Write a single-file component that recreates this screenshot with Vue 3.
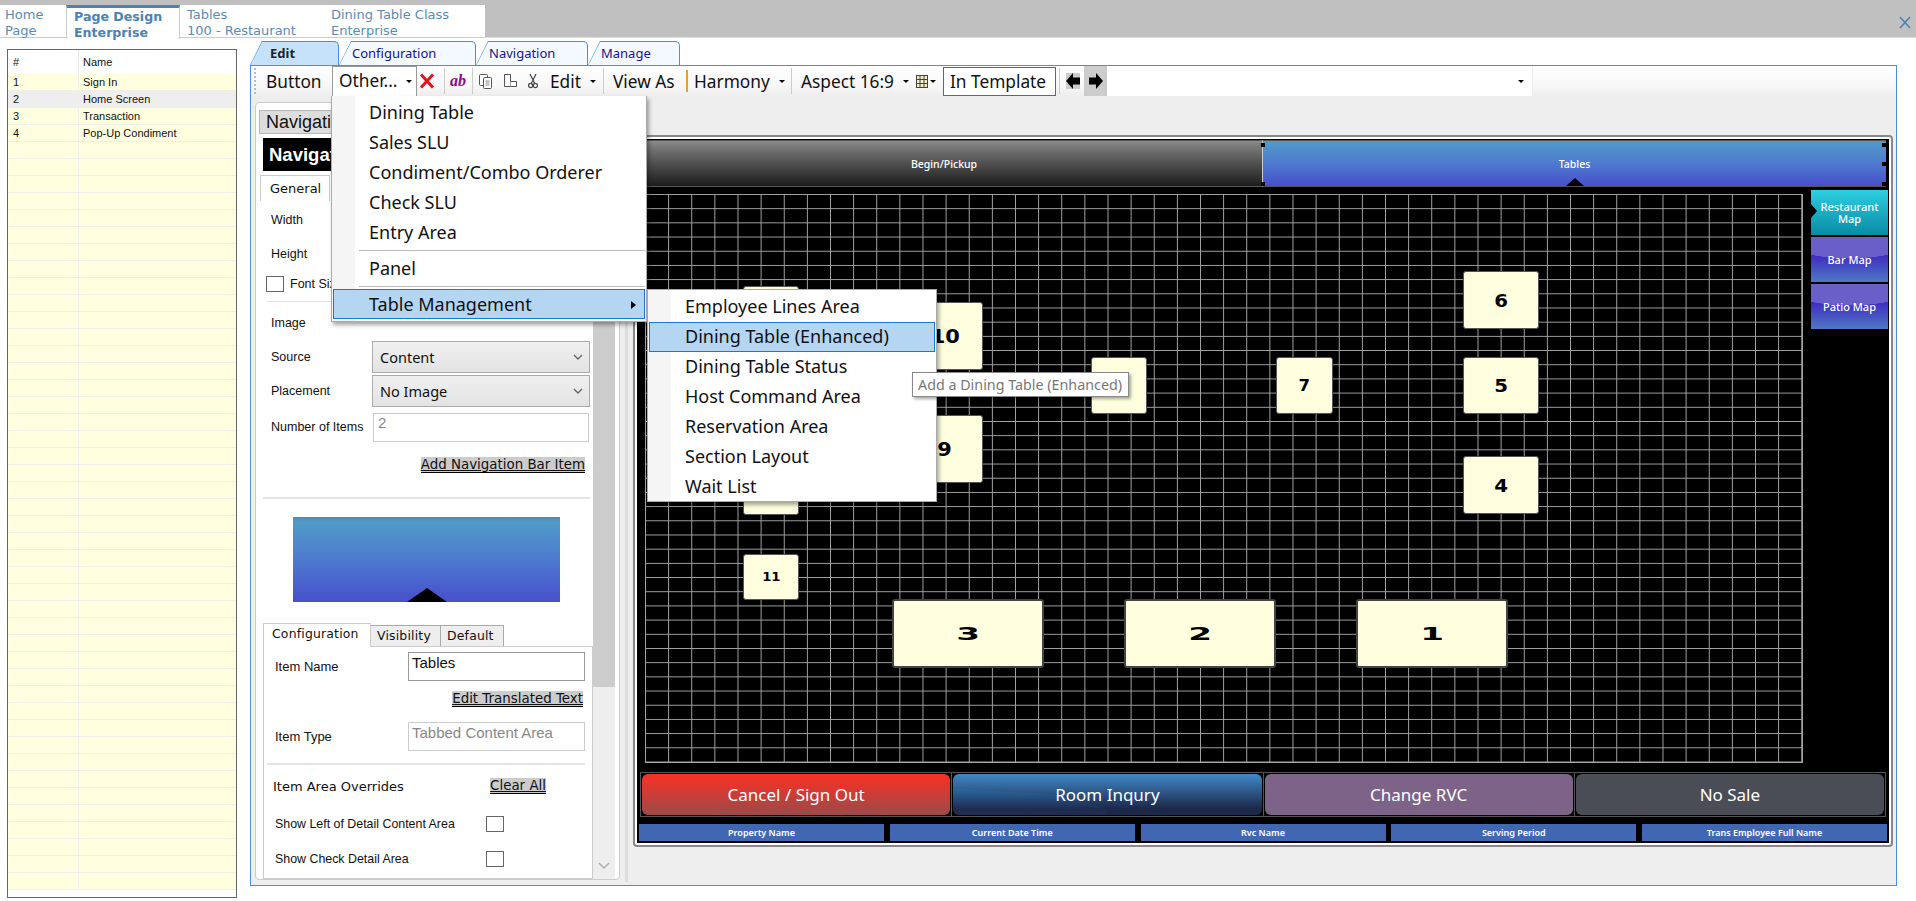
<template>
  <div class="app">
    <header class="top-bar">
      <div class="doc-tabs">
        <div
          v-for="tab in docTabs"
          :key="tab.title"
          class="doc-tab"
          :class="{ active: tab.active }"
          :style="{ width: tab.width + 'px' }"
        >
          <div>{{ tab.title }}</div>
          <div>{{ tab.sub }}</div>
        </div>
      </div>
      <svg class="close-x" width="12" height="13" viewBox="0 0 12 13">
        <path d="M1 1 L11 12 M11 1 L1 12" stroke="#4a82b4" stroke-width="1.6" fill="none" />
      </svg>
    </header>

    <div class="body-row">
      <aside class="page-list">
        <div class="list-head">
          <div class="col-num">#</div>
          <div class="col-name">Name</div>
        </div>
        <div
          v-for="(row, i) in pageRows"
          :key="i"
          class="list-row"
          :class="{ selected: row.name === 'Home Screen' }"
        >
          <div class="col-num">{{ row.num }}</div>
          <div class="col-name">{{ row.name }}</div>
        </div>
      </aside>

      <main class="editor">
        <nav class="edit-tabs">
          <div
            v-for="tab in editTabs"
            :key="tab.label"
            class="edit-tab"
            :class="{ active: tab.active }"
            :style="{ width: tab.width + 'px' }"
          >
            <span>{{ tab.label }}</span>
          </div>
        </nav>

        <div class="edit-panel">
          <div class="toolbar">
            <span class="grip"></span>
            <span class="tool-text t-button">Button</span>
            <span class="other-btn">Other...<i class="caret"></i></span>
            <svg class="i-x" width="16" height="16" viewBox="0 0 16 16">
              <path d="M2 1.5 L14 14.5 M14 1.5 L2 14.5" stroke="#e3141b" stroke-width="3" fill="none" />
            </svg>
            <span class="tool-sep"></span>
            <span class="ab">ab</span>
            <span class="tool-sep"></span>
            <svg class="i-copy" width="16" height="17" viewBox="0 0 16 17">
              <rect x="1.5" y="1.5" width="8" height="11" rx="1" fill="#fff" stroke="#555" />
              <rect x="5.5" y="4.5" width="8" height="11" rx="1" fill="#fff" stroke="#555" />
              <path d="M7.5 8 H11.5 M7.5 10 H11.5 M7.5 12 H11.5" stroke="#888" />
            </svg>
            <svg class="i-paste" width="16" height="17" viewBox="0 0 16 17">
              <path d="M2.5 1.5 H8.5 V13.5 H2.5 Z" fill="#fff" stroke="#555" />
              <path d="M8.5 8.5 H14.5 V13.5 H8.5" fill="#fff" stroke="#555" />
            </svg>
            <svg class="i-cut" width="10" height="17" viewBox="0 0 10 17">
              <path d="M2 1 L6.5 10 M8 1 L3.5 10" stroke="#444" stroke-width="1.2" fill="none" />
              <circle cx="2.6" cy="12.5" r="2.1" fill="none" stroke="#444" stroke-width="1.2" />
              <circle cx="7.4" cy="12.5" r="2.1" fill="none" stroke="#444" stroke-width="1.2" />
            </svg>
            <span class="tool-text t-edit">Edit<i class="caret"></i></span>
            <span class="tool-sep"></span>
            <span class="tool-text t-view">View As</span>
            <span class="orange-bar"></span>
            <span class="tool-text t-harmony">Harmony<i class="caret"></i></span>
            <span class="tool-sep"></span>
            <span class="tool-text t-aspect">Aspect 16:9<i class="caret"></i></span>
            <svg class="i-grid" width="12" height="13" viewBox="0 0 12 13">
              <rect x="0.5" y="0.5" width="11" height="12" fill="#f2efc8" stroke="#444" />
              <path d="M4 0 V13 M8 0 V13 M0 4.5 H12 M0 8.5 H12" stroke="#444" />
            </svg>
            <i class="caret small"></i>
            <span class="template-btn">In Template</span>
            <span class="tool-sep"></span>
            <span class="arrow-btn left">
              <svg width="14" height="16" viewBox="0 0 14 16"><path d="M0 8 L7 0 V4.5 H14 V11.5 H7 V16 Z" fill="#000" /></svg>
            </span>
            <span class="arrow-btn right">
              <svg width="14" height="16" viewBox="0 0 14 16"><path d="M14 8 L7 0 V4.5 H0 V11.5 H7 V16 Z" fill="#000" /></svg>
            </span>
            <span class="combo"><i class="caret"></i></span>
          </div>

          <div class="workspace">
            <section class="props">
              <div class="props-main">
                <div class="nav-tag">Navigation Bar</div>
                <div class="black-head">Navigation Bar</div>
                <div class="general-tabs">
                  <span class="general-tab">General</span>
                </div>

                <div class="form-row"><label>Width</label></div>
                <div class="form-row"><label>Height</label></div>
                <div class="font-row">
                  <span class="check"></span>
                  <label>Font Size</label>
                </div>
                <div class="divider thin"></div>
                <div class="form-row image-row"><label>Image</label></div>
                <div class="form-row">
                  <label>Source</label>
                  <div class="select">Content<svg width="10" height="6" viewBox="0 0 10 6"><path d="M1 1 L5 5 L9 1" stroke="#666" stroke-width="1.4" fill="none" /></svg></div>
                </div>
                <div class="form-row">
                  <label>Placement</label>
                  <div class="select">No Image<svg width="10" height="6" viewBox="0 0 10 6"><path d="M1 1 L5 5 L9 1" stroke="#666" stroke-width="1.4" fill="none" /></svg></div>
                </div>
                <div class="form-row items-row">
                  <label>Number of Items</label>
                  <div class="input disabled">2</div>
                </div>
                <div class="link-row"><a class="link">Add Navigation Bar Item</a></div>
                <div class="divider"></div>
                <div class="preview"><i class="preview-tri"></i></div>

                <div class="sub-tabs">
                  <span class="sub-tab active">Configuration</span>
                  <span class="sub-tab">Visibility</span>
                  <span class="sub-tab">Default</span>
                </div>
                <div class="sub-box">
                  <div class="item-row">
                    <label>Item Name</label>
                    <div class="input dark">Tables</div>
                  </div>
                  <div class="link-row translated"><a class="link">Edit Translated Text</a></div>
                  <div class="item-row type-row">
                    <label>Item Type</label>
                    <div class="input disabled">Tabbed Content Area</div>
                  </div>
                  <div class="divider box-divider"></div>
                  <div class="override-head">
                    <span>Item Area Overrides</span>
                    <a class="link">Clear All</a>
                  </div>
                  <div class="override-row">
                    <label>Show Left of Detail Content Area</label>
                    <span class="check"></span>
                  </div>
                  <div class="override-row">
                    <label>Show Check Detail Area</label>
                    <span class="check"></span>
                  </div>
                </div>
              </div>
              <div class="scrollbar">
                <div class="scroll-thumb"></div>
                <svg class="scroll-down" width="12" height="8" viewBox="0 0 12 8"><path d="M1 1 L6 6 L11 1" stroke="#aaa" stroke-width="1.4" fill="none" /></svg>
              </div>
            </section>

            <div class="splitter"></div>

            <section class="canvas-frame">
              <div class="canvas">
                <div class="page-tabs">
                  <div class="page-tab begin">Begin/Pickup</div>
                  <div class="page-tab tables">
                    Tables
                    <i class="tab-tri"></i>
                    <i class="handle h-tl"></i>
                    <i class="handle h-bl"></i>
                    <i class="handle h-tr"></i>
                    <i class="handle h-mr"></i>
                    <i class="handle h-br"></i>
                  </div>
                </div>

                <div class="floor-row">
                  <div class="floor">
                    <div
                      v-for="t in diningTables"
                      :key="t.label + t.x + t.y"
                      class="table-card"
                      :class="t.kind"
                      :style="{ left: t.x + 'px', top: t.y + 'px', width: t.w + 'px', height: t.h + 'px' }"
                    >
                      <span>{{ t.label }}</span>
                    </div>
                  </div>
                  <div class="side-maps">
                    <div class="map-btn restaurant"><i class="map-tri"></i><span>Restaurant<br />Map</span></div>
                    <div class="map-btn purple"><span>Bar Map</span></div>
                    <div class="map-btn purple"><span>Patio Map</span></div>
                  </div>
                </div>

                <div class="action-row">
                  <div v-for="a in actions" :key="a.label" class="action-cell">
                    <div class="action-btn" :class="a.kind"><span>{{ a.label }}</span></div>
                  </div>
                </div>

                <div class="status-row">
                  <div v-for="s in statusItems" :key="s" class="status-cell">{{ s }}</div>
                </div>
              </div>
            </section>
          </div>
        </div>
      </main>
    </div>

    <!-- open dropdown, sits over the panel and the canvas -->
    <div class="menu main-menu">
      <template v-for="item in mainMenu" :key="item.label">
        <div v-if="item.sep" class="menu-sep"></div>
        <div v-else class="menu-item" :class="{ hot: item.hot }">
          {{ item.label }}
          <svg v-if="item.hot" class="sub-arrow" width="5" height="8" viewBox="0 0 5 8"><path d="M0 0 L5 4 L0 8 Z" fill="#000" /></svg>
        </div>
      </template>
    </div>
    <div class="menu sub-menu">
      <div v-for="item in subMenu" :key="item" class="menu-item" :class="{ hot: item === 'Dining Table (Enhanced)' }">
        {{ item }}
      </div>
    </div>
    <div class="tooltip">Add a Dining Table (Enhanced)</div>
  </div>
</template>

<script setup>
const docTabs = [
  { title: 'Home', sub: 'Page', width: 66 },
  { title: 'Page Design', sub: 'Enterprise', width: 114, active: true },
  { title: 'Tables', sub: '100 - Restaurant', width: 144 },
  { title: 'Dining Table Class', sub: 'Enterprise', width: 161 },
]

const names = ['Sign In', 'Home Screen', 'Transaction', 'Pop-Up Condiment']
const pageRows = Array.from({ length: 48 }, (_, i) => ({
  num: names[i] ? i + 1 : '',
  name: names[i] || '',
}))

const editTabs = [
  { label: 'Edit', width: 89, active: true },
  { label: 'Configuration', width: 137 },
  { label: 'Navigation', width: 112 },
  { label: 'Manage', width: 92 },
]

// positions are relative to the floor grid
const diningTables = [
  { label: '', x: 98, y: 92, w: 56, h: 58 },
  { label: '', x: 98, y: 263, w: 56, h: 58 },
  { label: '10', x: 262, y: 108, w: 76, h: 68, kind: 'mid' },
  { label: '9', x: 262, y: 221, w: 76, h: 68, kind: 'mid' },
  { label: '', x: 446, y: 163, w: 56, h: 57 },
  { label: '7', x: 631, y: 163, w: 57, h: 57, kind: 'small' },
  { label: '6', x: 818, y: 77, w: 76, h: 58 },
  { label: '5', x: 818, y: 163, w: 76, h: 57 },
  { label: '4', x: 818, y: 262, w: 76, h: 58 },
  { label: '11', x: 98, y: 360, w: 56, h: 46, kind: 'tiny' },
  { label: '3', x: 247, y: 405, w: 152, h: 69, kind: 'wide' },
  { label: '2', x: 479, y: 405, w: 152, h: 69, kind: 'wide' },
  { label: '1', x: 711, y: 405, w: 152, h: 69, kind: 'wide' },
]

const actions = [
  { label: 'Cancel / Sign Out', kind: 'red' },
  { label: 'Room Inqury', kind: 'blue' },
  { label: 'Change RVC', kind: 'violet' },
  { label: 'No Sale', kind: 'slate' },
]

const statusItems = ['Property Name', 'Current Date Time', 'Rvc Name', 'Serving Period', 'Trans Employee Full Name']

const mainMenu = [
  { label: 'Dining Table' },
  { label: 'Sales SLU' },
  { label: 'Condiment/Combo Orderer' },
  { label: 'Check SLU' },
  { label: 'Entry Area' },
  { label: 'sep1', sep: true },
  { label: 'Panel' },
  { label: 'sep2', sep: true },
  { label: 'Table Management', hot: true },
]

const subMenu = [
  'Employee Lines Area',
  'Dining Table (Enhanced)',
  'Dining Table Status',
  'Host Command Area',
  'Reservation Area',
  'Section Layout',
  'Wait List',
]
</script>

<style>
html, body { overflow: hidden; background: #fff; }
</style>

<style scoped>
.app {
  position: relative;
  width: 1916px;
  height: 901px;
  overflow: hidden;
  background: #fff;
  font-family: "Liberation Sans", Arial, sans-serif;
  color: #111;
}

/* top document tabs */
.top-bar {
  height: 38px;
  box-sizing: border-box;
  padding-top: 5px;
  background: #c0c0c0;
  border-bottom: 1px solid #ddd;
  display: flex;
  justify-content: space-between;
}
.doc-tabs {
  display: flex;
  height: 33px;
}
.doc-tab {
  box-sizing: border-box;
  height: 33px;
  padding: 2px 0 0 5px;
  background: #fff;
  border-bottom: 1px solid #ccc;
  font-family: "DejaVu Sans", sans-serif;
  font-size: 13px;
  line-height: 16px;
  color: #5b8bb5;
  white-space: nowrap;
}
.doc-tab:nth-child(3) { padding-left: 7px; }
.doc-tab:nth-child(4) { padding-left: 7px; }
.doc-tab.active {
  height: 34px;
  padding: 1px 0 0 7px;
  border-top: 3px solid #4a82b4;
  border-left: 1px solid #ccc;
  border-right: 1px solid #ccc;
  border-bottom: 0;
  font-weight: 700;
  font-size: 12.6px;
  color: #4a82b4;
}
.close-x { margin: 11px 5px 0 0; }

.body-row {
  display: flex;
  height: 863px;
  padding-left: 7px;
}

/* page list */
.page-list {
  box-sizing: border-box;
  width: 230px;
  height: 849px;
  margin: 11px 13px 0 0;
  border: 1px solid #666;
  overflow: hidden;
  font-size: 11px;
}
.list-head {
  display: flex;
  height: 24px;
  line-height: 24px;
  background: #fff;
}
.list-head .col-name { border-left: 1px solid #e6e6e6; }
.list-row {
  display: flex;
  height: 17px;
  line-height: 16px;
  box-sizing: border-box;
  background: #ffffe0;
  border-bottom: 1px solid #efefe8;
}
.list-row.selected { background: #eeeeee; }
.col-num { width: 70px; padding-left: 5px; box-sizing: border-box; }
.col-name { flex: 1; padding-left: 4px; border-left: 1px solid #f0f0ea; }

/* editor */
.editor {
  width: 1647px;
  margin-top: 3px;
  display: flex;
  flex-direction: column;
}
.edit-tabs {
  display: flex;
  height: 24px;
  flex-shrink: 0;
}
.edit-tab {
  position: relative;
  box-sizing: border-box;
  height: 24px;
  padding-left: 12px;
  background: #f3f9ff;
  border-top: 1px solid #4a90d9;
  border-right: 1px solid #4a90d9;
  border-radius: 0 5px 0 0;
  font-family: "Noto Sans", sans-serif;
  font-size: 13px;
  line-height: 22px;
  color: #14148c;
  z-index: 1;
  clip-path: polygon(12px 0, 100% 0, 100% 100%, 0 100%);
}
.edit-tab::before {
  content: "";
  position: absolute;
  left: 6px;
  bottom: -2px;
  width: 1px;
  height: 30px;
  background: #4a90d9;
  transform: rotate(27deg);
}
.edit-tab span { position: relative; margin-left: 1px; }
.edit-tab.active {
  padding-left: 19px;
  background: #c6e2fb;
  color: #222;
  font-weight: 700;
}
.edit-panel {
  flex: none;
  box-sizing: border-box;
  height: 821px;
  border: 1px solid #4a90d9;
  display: flex;
  flex-direction: column;
  background: #eee;
}

/* toolbar */
.toolbar {
  display: flex;
  align-items: center;
  height: 30px;
  flex-shrink: 0;
  background: linear-gradient(#fff, #f8f8f8 60%, #eee);
  font-family: "Noto Sans", sans-serif;
  font-size: 17.3px;
  white-space: nowrap;
}
.grip {
  width: 2px;
  height: 26px;
  margin: 0 10px 0 3px;
  background: repeating-linear-gradient(#bbb 0 2px, transparent 2px 4px);
}
.tool-text { display: inline-flex; align-items: center; }
.caret {
  display: inline-block;
  width: 0;
  height: 0;
  margin-left: 9px;
  border-left: 3px solid transparent;
  border-right: 3px solid transparent;
  border-top: 3px solid #000;
}
.caret.small { margin-left: 2px; }
.t-button { width: 66px; }
.other-btn {
  box-sizing: border-box;
  width: 85px;
  height: 30px;
  padding-left: 6px;
  line-height: 28px;
  background: #fff;
  border: 1px solid #999;
  border-bottom: 0;
  position: relative;
  z-index: 3;
}
.other-btn .caret {
  position: absolute;
  right: 4px;
  top: 13px;
  margin: 0;
}
.i-x { margin: 0 9px 0 2px; flex-shrink: 0; }
.tool-sep {
  width: 1px;
  height: 26px;
  flex-shrink: 0;
  background: #ccc;
}
.ab {
  width: 16px;
  margin: 0 6px 0 5px;
  font-family: "Liberation Serif", serif;
  font-style: italic;
  font-weight: 700;
  font-size: 16px;
  color: #8a0a8a;
}
.i-copy { margin: 0 8px 0 5px; flex-shrink: 0; }
.i-paste { margin-right: 10px; flex-shrink: 0; }
.i-cut { flex-shrink: 0; }
.t-edit { width: 53px; margin-left: 12px; }
.t-view { width: 66px; margin-left: 9px; }
.orange-bar {
  width: 2px;
  height: 22px;
  margin: 0 6px 0 7px;
  flex-shrink: 0;
  background: #e2a03c;
}
.t-harmony { width: 97px; }
.t-aspect { width: 114px; margin-left: 9px; }
.i-grid { margin-left: 1px; flex-shrink: 0; }
.template-btn {
  box-sizing: border-box;
  height: 29px;
  width: 113px;
  margin: 0 3px 0 7px;
  padding-left: 6px;
  line-height: 27px;
  background: #fff;
  border: 1px solid #1a7bc4;
}
.arrow-btn {
  display: flex;
  align-items: center;
  justify-content: center;
  height: 30px;
}
.arrow-btn.left {
  width: 20px;
  margin-left: 3px;
}
.arrow-btn.left svg { background: #ccc; }
.arrow-btn.right {
  width: 23px;
  margin-left: 1px;
  background: #ccc;
}
.combo {
  box-sizing: border-box;
  width: 426px;
  height: 30px;
  background: #fff;
  border-right: 1px solid #eee;
  position: relative;
}
.combo .caret {
  position: absolute;
  right: 8px;
  top: 14px;
  margin: 0;
}

/* workspace */
.workspace {
  flex: 1;
  display: flex;
  padding: 6px 0 0 4px;
  min-height: 0;
}
.props {
  box-sizing: border-box;
  width: 365px;
  height: 778px;
  display: flex;
  background: #fff;
  border: 1px solid #ccc;
  border-radius: 4px;
  overflow: hidden;
}
.props-main {
  width: 338px;
  font-size: 13px;
  color: #111;
}
.scrollbar {
  position: relative;
  width: 22px;
  margin-right: 4px;
  background: #eee;
}
.scroll-thumb {
  height: 584px;
  background: #ccc;
}
.scroll-down {
  position: absolute;
  left: 5px;
  bottom: 9px;
}
.nav-tag {
  box-sizing: border-box;
  width: 300px;
  height: 24px;
  margin: 7px 0 0 3px;
  padding-left: 6px;
  background: #ddd;
  border: 1px solid #b5b5b5;
  font-size: 18px;
  line-height: 22px;
  white-space: nowrap;
  overflow: hidden;
}
.black-head {
  height: 33px;
  margin: 4px 3px 0 7px;
  padding-left: 6px;
  background: #000;
  color: #fff;
  font-weight: 700;
  font-size: 18.5px;
  line-height: 33px;
}
.general-tabs {
  height: 26px;
  margin: 4px 0 2px 4px;
}
.general-tab {
  display: inline-block;
  box-sizing: border-box;
  width: 70px;
  height: 26px;
  padding-left: 9px;
  border: 1px solid #ccc;
  border-bottom: 0;
  font-family: "DejaVu Sans", sans-serif;
  font-size: 13px;
  line-height: 25px;
}
.form-row {
  display: flex;
  align-items: center;
  height: 34px;
  padding-left: 15px;
}
.form-row label { width: 101px; flex-shrink: 0; font-size: 12.5px; }
.font-row {
  display: flex;
  align-items: center;
  height: 18px;
  margin: 4px 0 0 10px;
  gap: 6px;
}
.font-row label { font-size: 12.5px; }
.check {
  display: inline-block;
  box-sizing: border-box;
  width: 18px;
  height: 16px;
  border: 1px solid #666;
  background: #fff;
}
.divider {
  height: 2px;
  margin-left: 7px;
  margin-right: 3px;
  background: #e4e4e4;
}
.divider.thin { height: 1px; margin: 8px 0 0 11px; background: #ddd; }
.image-row { margin-top: 4px; }
.select {
  box-sizing: border-box;
  display: flex;
  align-items: center;
  justify-content: space-between;
  width: 218px;
  height: 32px;
  padding: 0 6px 0 7px;
  background: linear-gradient(#f0f0f0, #e3e3e3);
  border: 1px solid #aaa;
  font-family: "Noto Sans", sans-serif;
  font-size: 14.5px;
}
.input {
  box-sizing: border-box;
  border: 1px solid #aaa;
  font-size: 15px;
  line-height: 17px;
  padding: 1px 3px;
  background: #fff;
}
.input.disabled { color: #888; border-color: #ccc; }
.items-row { margin-top: 2px; }
.items-row .input { width: 216px; height: 29px; margin-left: 1px; padding: 0 4px; }
.link-row {
  display: flex;
  justify-content: flex-end;
  height: 16px;
  margin-top: 13px;
  padding-right: 8px;
}
.link {
  display: inline-block;
  height: 16px;
  background: #ccc;
  border-bottom: 1px solid #000;
  box-sizing: border-box;
  text-decoration: underline;
  font-family: "DejaVu Sans", sans-serif;
  font-size: 13.4px;
  line-height: 15px;
  color: #111;
  white-space: nowrap;
}
.link-row + .divider { margin-top: 24px; }
.preview {
  position: relative;
  width: 267px;
  height: 85px;
  margin: 18px 0 0 37px;
  background: linear-gradient(#4c8cb4 0, #4f9ac8 6%, #4f7ed0 45%, #474fcc 100%);
}
.preview-tri {
  position: absolute;
  left: 114px;
  bottom: 0;
  border-left: 20px solid transparent;
  border-right: 20px solid transparent;
  border-bottom: 14px solid #000;
}
.sub-tabs {
  display: flex;
  align-items: flex-end;
  height: 24px;
  margin: 20px 0 0 7px;
}
.sub-tab {
  box-sizing: border-box;
  height: 21px;
  padding: 0 6px;
  background: #eee;
  border: 1px solid #aaa;
  border-bottom: 0;
  border-left: 0;
  font-family: "DejaVu Sans", sans-serif;
  font-size: 12.4px;
  line-height: 20px;
  letter-spacing: 0.2px;
}
.sub-tab.active {
  height: 24px;
  width: 108px;
  padding-left: 8px;
  background: #fff;
  border: 1px solid #ccc;
  border-bottom: 0;
  margin-bottom: -1px;
  position: relative;
  z-index: 1;
}
.sub-tab:nth-child(2) { width: 70px; }
.sub-tab:nth-child(3) { width: 63px; }
.sub-box {
  box-sizing: border-box;
  width: 330px;
  height: 233px;
  margin-left: 7px;
  padding: 5px 5px 0 0;
  border: 1px solid #ccc;
  overflow: hidden;
}
.item-row {
  display: flex;
  align-items: center;
  height: 29px;
  padding-left: 11px;
}
.item-row label { width: 133px; flex-shrink: 0; font-size: 13px; }
.item-row .input { width: 177px; height: 29px; }
.input.dark { border-color: #999; }
.translated { margin-top: 10px; padding-right: 4px; }
.type-row { margin-top: 15px; }
.box-divider { margin: 12px 2px 0 3px; }
.override-head {
  display: flex;
  align-items: center;
  justify-content: space-between;
  height: 16px;
  margin-top: 13px;
  padding: 0 41px 0 9px;
  font-family: "DejaVu Sans", sans-serif;
  font-size: 13px;
}
.override-row {
  display: flex;
  align-items: center;
  justify-content: space-between;
  width: 229px;
  height: 35px;
  padding-left: 11px;
}
.override-row label { font-size: 12.4px; }
.override-head + .override-row { margin-top: 12px; }
.splitter {
  width: 3px;
  margin: 0 5px;
  height: 780px;
  background: #ddd;
}

/* POS page preview */
.canvas-frame {
  box-sizing: border-box;
  width: 1260px;
  height: 712px;
  margin-top: 33px;
  border: 2px solid #888;
  border-radius: 4px;
  padding: 2px;
  background: #fff;
}
.canvas {
  height: 100%;
  background: #000;
  display: flex;
  flex-direction: column;
  color: #fff;
}
.page-tabs {
  display: flex;
  height: 47px;
  flex-shrink: 0;
  padding: 1px 3px 0 1px;
  font-family: "Noto Sans", sans-serif;
  font-size: 10.5px;
}
.page-tab {
  display: flex;
  align-items: center;
  justify-content: center;
  position: relative;
  font-weight: 500;
  border-bottom: 1px solid #555;
  border-top: 1px solid #555;
  box-sizing: border-box;
}
.page-tab.begin {
  width: 624px;
  padding-right: 12px;
  background: linear-gradient(#8a8a8a, #6a6a6a 25%, #1c1c1c);
}
.page-tab.tables {
  flex: 1;
  background: linear-gradient(#4f9ac8, #4f7ed0 45%, #474fcc);
  border-left: 1px solid #ccc;
}
.tab-tri {
  position: absolute;
  left: 50%;
  bottom: 0;
  margin-left: -9px;
  border-left: 9px solid transparent;
  border-right: 9px solid transparent;
  border-bottom: 8px solid #000;
}
.handle {
  position: absolute;
  width: 4px;
  height: 4px;
  background: #000;
}
.h-tl { left: -2px; top: 2px; }
.h-bl { left: -2px; bottom: 0; }
.h-tr { right: 0; top: 2px; }
.h-mr { right: 0; top: 21px; }
.h-br { right: 0; bottom: 0; }

.floor-row {
  display: flex;
  height: 577px;
  flex-shrink: 0;
  padding: 7px 0 0 8px;
  box-sizing: border-box;
}
.floor {
  position: relative;
  box-sizing: border-box;
  width: 1158px;
  height: 569px;
  border-right: 1px solid #a4a4a4;
  border-bottom: 1px solid #a4a4a4;
  background-image:
    linear-gradient(#a4a4a4 1px, transparent 1px),
    linear-gradient(90deg, #a4a4a4 1px, transparent 1px);
  background-size: 23.14px 14.2px;
}
.table-card {
  position: absolute;
  box-sizing: border-box;
  display: flex;
  align-items: center;
  justify-content: center;
  background: #ffffe0;
  border: 1px solid #555;
  border-radius: 3px;
  font-family: "DejaVu Sans", sans-serif;
  font-weight: 700;
  font-size: 18px;
  color: #000;
}
.table-card span { display: inline-block; transform: scaleX(1.1); }
.table-card.small { font-size: 15px; }
.table-card.tiny { font-size: 12px; }
.table-card.mid { font-size: 19px; }
.table-card.wide { border-width: 2px; border-color: #444; }
.table-card.wide span { transform: scaleX(1.9); }

.side-maps {
  display: flex;
  flex-direction: column;
  gap: 2px;
  width: 77px;
  margin: -4px 0 0 8px;
}
.map-btn {
  position: relative;
  height: 45px;
  display: flex;
  align-items: center;
  justify-content: center;
  text-align: center;
  font-family: "Noto Sans", sans-serif;
  font-size: 11px;
  line-height: 12px;
  font-weight: 500;
}
.map-btn.restaurant {
  background: linear-gradient(#2ccfe0, #0a8aa6);
}
.map-btn.purple {
  background:
    radial-gradient(ellipse 90% 48% at 50% 0, #6a5fc9 98%, transparent 100%),
    linear-gradient(#3a1fc0 30%, #4f78c4);
}
.map-tri {
  position: absolute;
  left: 0;
  top: 14px;
  border-top: 7px solid transparent;
  border-bottom: 7px solid transparent;
  border-left: 6px solid #000;
}

.action-row {
  display: flex;
  height: 45px;
  flex-shrink: 0;
  margin: 8px 3px 0 3px;
  border: 1px solid #555;
  box-sizing: border-box;
}
.action-cell {
  flex: 1;
  padding: 1px;
  border-right: 1px solid #555;
}
.action-cell:last-child { border-right: 0; }
.action-btn {
  height: 100%;
  display: flex;
  align-items: center;
  justify-content: center;
  border-radius: 6px;
  font-family: "Noto Sans", sans-serif;
  font-size: 17px;
  position: relative;
  overflow: hidden;
}
.action-btn span { position: relative; }
.action-btn.red { background: linear-gradient(#f43225, #e8352a 20%, #9a4a4a); }
.action-btn.blue { background: linear-gradient(#3f88c8, #1c2848 85%); }
.action-btn.blue::before {
  content: "";
  position: absolute;
  inset: 0;
  background: linear-gradient(#2a70ab 30%, #1f2c50 85%);
  clip-path: polygon(0 36%, 33% 50%, 50% 85%, 50% 100%, 0 100%);
}
.action-btn.violet { background: #7d6388; }
.action-btn.slate { background: #4a4d55; }

.status-row {
  display: flex;
  justify-content: space-between;
  margin-top: 7px;
  padding: 0 2px 0 2px;
}
.status-cell {
  box-sizing: border-box;
  width: 245px;
  height: 17px;
  background: #4267b2;
  text-align: center;
  font-family: "Noto Sans", sans-serif;
  font-size: 9px;
  line-height: 17px;
  font-weight: 600;
}

/* dropdown menus */
.menu {
  position: absolute;
  box-sizing: border-box;
  padding: 1px;
  background:
    linear-gradient(90deg, #f5f5f5, #f5f5f5 22px, #fff 24px);
  border: 1px solid #aaa;
  box-shadow: 2px 3px 4px rgba(0, 0, 0, 0.35);
  font-family: "Noto Sans", sans-serif;
  font-size: 18px;
  color: #111;
  z-index: 10;
}
.main-menu {
  left: 331px;
  top: 96px;
  width: 316px;
  height: 226px;
  border-top: 0;
  padding-top: 1px;
}
.sub-menu {
  left: 647px;
  top: 289px;
  width: 290px;
  height: 213px;
  padding-top: 2px;
}
.sub-menu .menu-item { line-height: 27px; }
.menu-item {
  position: relative;
  box-sizing: border-box;
  height: 30px;
  padding-left: 35px;
  line-height: 28px;
  white-space: nowrap;
  border: 1px solid transparent;
}
.menu-item.hot {
  background: #b5d6f2;
  border-color: #1a7bc4;
}
.sub-arrow {
  position: absolute;
  right: 8px;
  top: 11px;
}
.menu-sep {
  height: 1px;
  margin: 3px 0 2px 26px;
  background: #bbb;
}
.tooltip {
  position: absolute;
  left: 912px;
  top: 372px;
  box-sizing: border-box;
  width: 217px;
  height: 25px;
  padding-left: 5px;
  background: #fff;
  border: 1px solid #888;
  box-shadow: 2px 2px 3px rgba(0, 0, 0, 0.35);
  font-family: "Noto Sans", sans-serif;
  font-size: 14.3px;
  line-height: 23px;
  color: #777;
  white-space: nowrap;
  z-index: 11;
}
</style>
